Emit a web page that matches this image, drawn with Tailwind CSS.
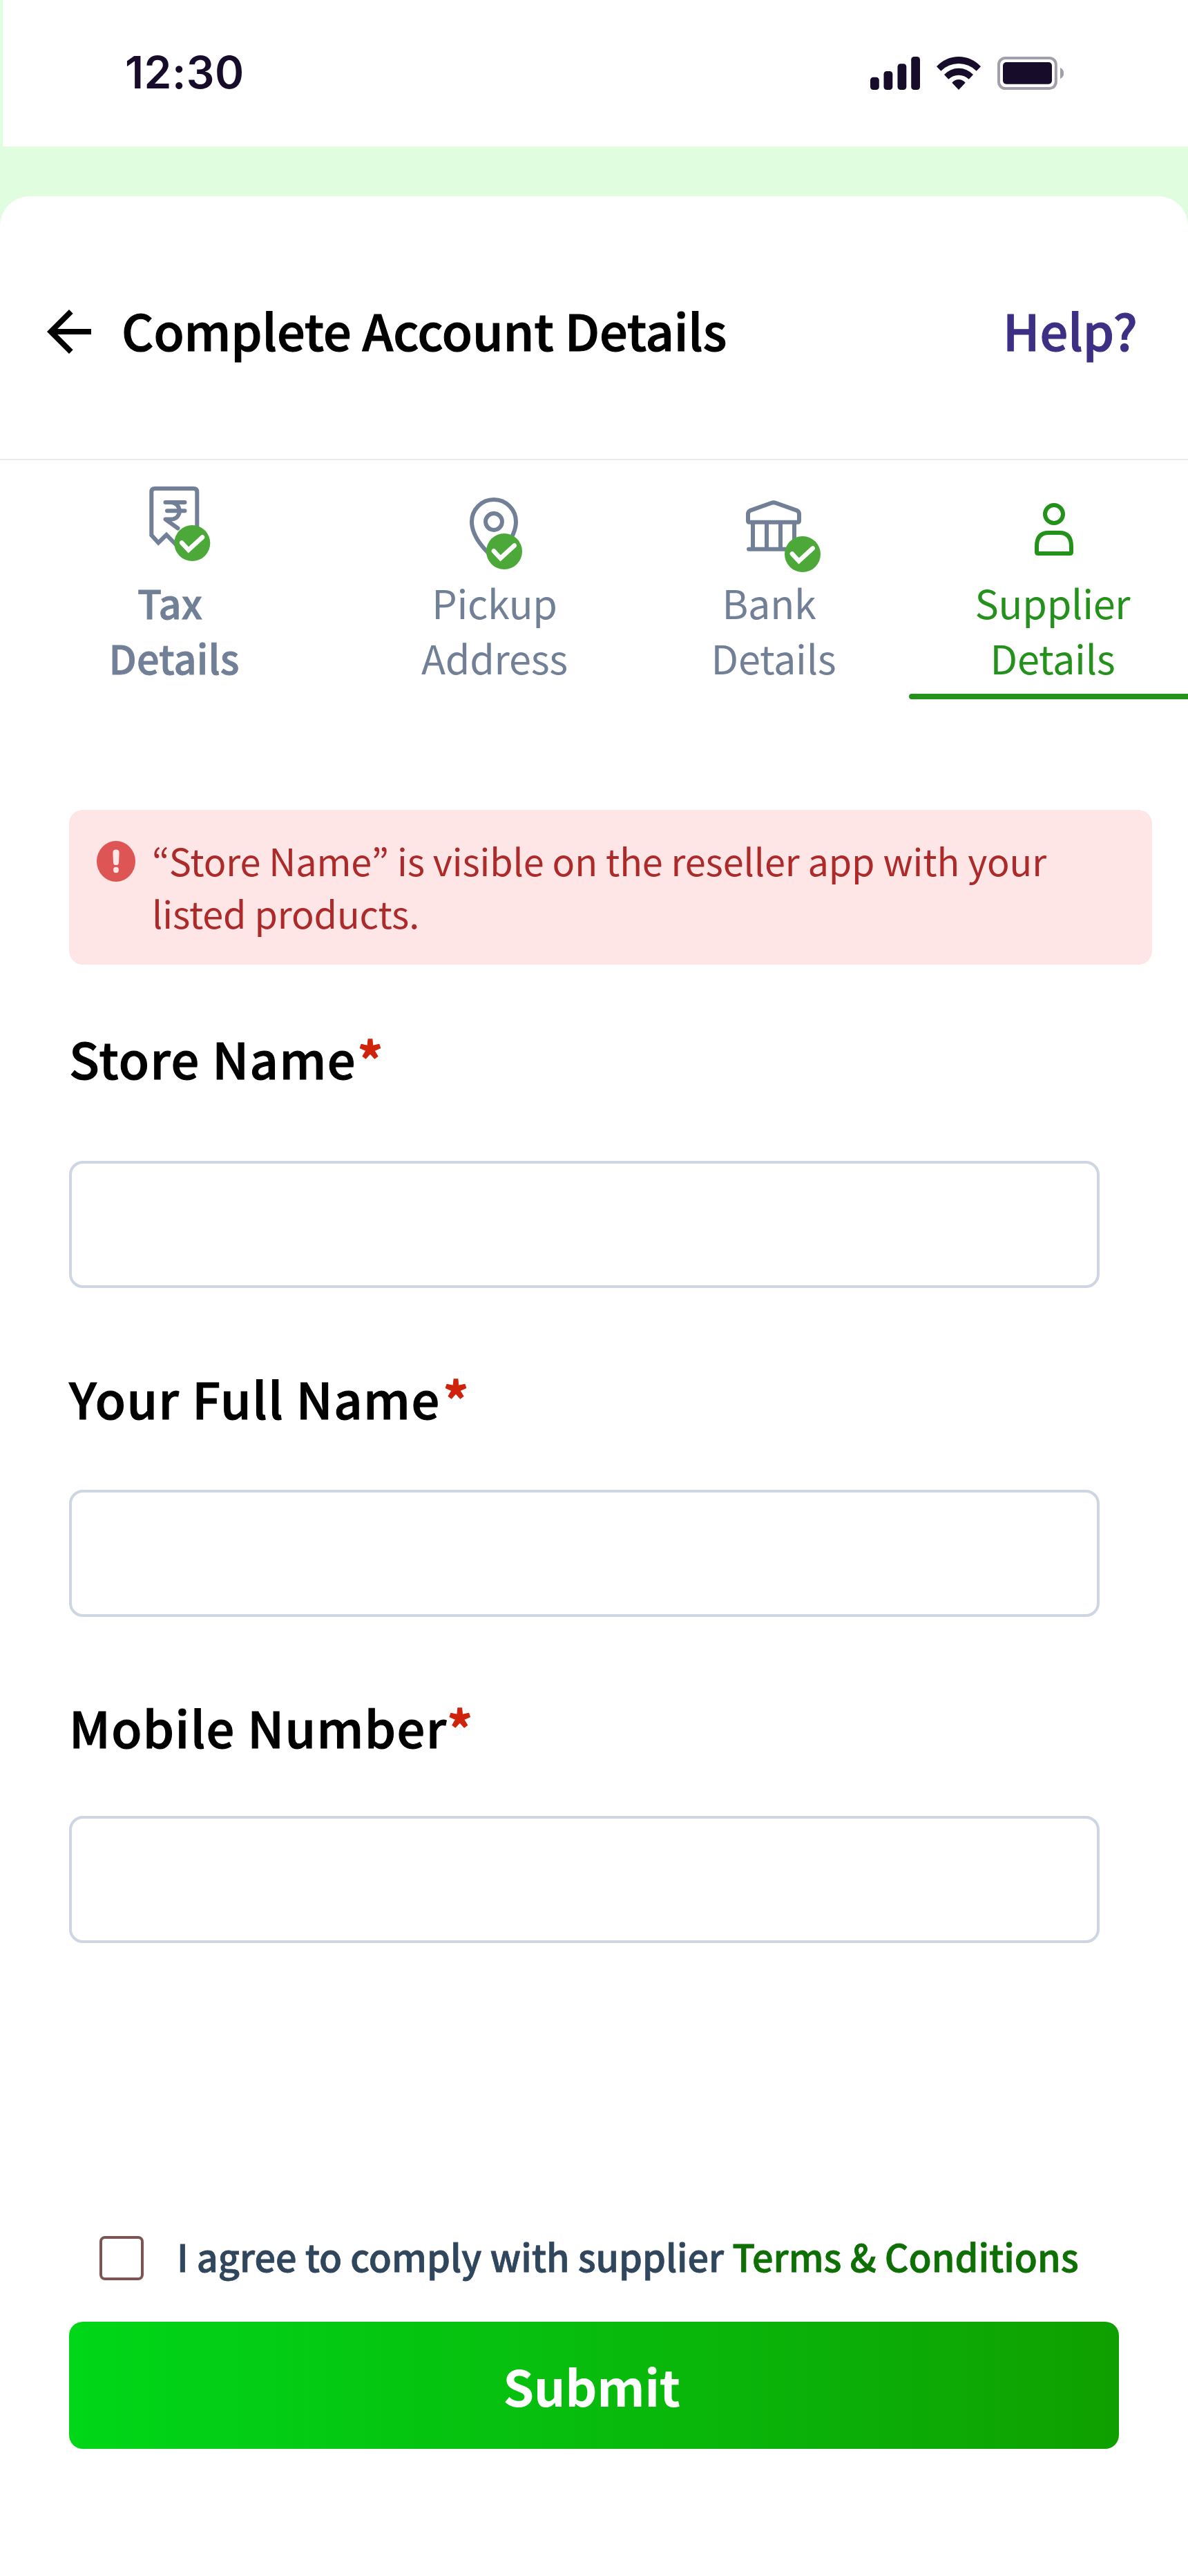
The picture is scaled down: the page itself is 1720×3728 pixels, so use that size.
<!DOCTYPE html>
<html lang="en">
<head>
<meta charset="utf-8">
<title>Complete Account Details</title>
<script src="https://cdn.jsdelivr.net/npm/@tailwindcss/browser@4"></script>
</head>
<body class="bg-[#e0fddf]">
<div class="flex min-h-[3728px] w-[1720px] flex-col overflow-hidden bg-[#e0fddf] font-['Noto_Sans_CJK_KR',sans-serif]">

  <!-- Status bar -->
  <div class="ml-1 flex h-[212px] items-center justify-between bg-white pr-[180px] pl-[177px]">
    <span class="pb-[3px] font-['Inter',sans-serif] text-[64px] leading-none font-semibold tracking-[0.5px] text-[#170d2b]">12:30</span>
    <svg class="h-12 w-[280px]" viewBox="1260 82 280 48" fill="#170d2b">
      <rect x="1260" y="111.7" width="12.8" height="18.3" rx="4.3"/>
      <rect x="1279.5" y="103" width="12.8" height="27" rx="4.3"/>
      <rect x="1299.5" y="92.2" width="12.8" height="37.8" rx="4.3"/>
      <rect x="1319.2" y="82" width="12.8" height="48" rx="4.3"/>
      <path d="M1356 96.3A43 43 0 0 1 1420 96.3L1413.7 102.7A36.2 36.2 0 0 0 1362.3 102.7Z"/>
      <path d="M1367 108A28.4 28.4 0 0 1 1409 108L1402.7 114.7A21 21 0 0 0 1373.3 114.7Z"/>
      <path d="M1378.3 119.7A12.4 12.4 0 0 1 1397.7 119.7L1388 130Z"/>
      <rect x="1446" y="84" width="82.8" height="44" rx="9.5" fill="none" stroke="#a29eaa" stroke-width="4"/>
      <rect x="1452" y="90" width="71" height="31.7" rx="5"/>
      <path d="M1535 98C1542 101 1542 111 1535 114Z" fill="#a29eaa"/>
    </svg>
  </div>

  <main class="mt-[72px] flex grow flex-col rounded-t-[43px] bg-white">
    <!-- Header -->
    <header class="flex h-[382px] items-start border-b-2 border-[#e8ecec] pt-[148px] pl-[52px]">
      <svg class="size-24 shrink-0" viewBox="0 0 24 24"><path d="M20 11H7.83l5.59-5.59L12 4l-8 8 8 8 1.41-1.41L7.83 13H20v-2z"/></svg>
      <h1 class="ml-7 text-[72px] leading-[89px] font-medium tracking-[-0.12px] whitespace-nowrap text-black [-webkit-text-stroke:1.1px]">Complete Account Details</h1>
      <a class="ml-auto w-[268px] text-[72px] leading-[89px] font-medium tracking-[0.05px] text-[#3d3084] [-webkit-text-stroke:1.1px]">Help?</a>
    </header>

    <!-- Steps -->
    <nav class="flex text-center text-[57.6px] leading-[80px] tracking-[-0.28px] text-[#718096]">
      <div class="flex w-[504px] flex-col items-center pl-px font-medium tracking-normal">
        <svg class="h-[165px] w-32" viewBox="188.5 666 128 165" fill="none" stroke="#718096" stroke-width="6">
          <path d="M284.8 780V712Q284.8 707 279.8 707H223.8Q218.8 707 218.8 712V774.5L228.8 785.5L240.5 774L255 789"/>
          <path d="M239 727H267M241.500 739.300H267M246 727C263.500 727 263.500 751.500 247 751.500H239L257 764.500" stroke-linecap="round" stroke-linejoin="round"/>
          <circle cx="277.800" cy="786" r="26" fill="#4ca839" stroke="none"/>
          <path d="M262.700 785.500L272.400 796L292.500 777.500" stroke="#fff" stroke-width="6.500" stroke-linecap="round"/>
        </svg>
        <span class="block pr-[13px] [-webkit-text-stroke:0.9px]">Tax</span>
        <span class="block pr-px tracking-[0.1px] [-webkit-text-stroke:0.9px]">Details</span>
      </div>
      <div class="flex w-[424px] flex-col items-center">
        <svg class="h-[165px] w-32" viewBox="652 666 128 165" fill="none" stroke="#718096" stroke-width="6">
          <path d="M715 808C702 796 683 777 683 755A32 32 0 0 1 747 755C747 777 728 796 715 808Z"/>
          <circle cx="715" cy="755" r="12"/>
          <circle cx="730" cy="798" r="26" fill="#4ca839" stroke="none"/>
          <path d="M714.900 797.500L724.600 808L744.700 789.500" stroke="#fff" stroke-width="6.500" stroke-linecap="round"/>
        </svg>
        <span class="block">Pickup</span>
        <span class="block">Address</span>
      </div>
      <div class="flex w-[388px] flex-col items-center">
        <svg class="h-[165px] w-32" viewBox="1058 666 128 165" fill="none" stroke="#718096" stroke-width="6" overflow="visible">
          <path d="M1085 755.700Q1083 755.700 1083 753.700V744Q1083 740.500 1086 738.800L1116.500 728Q1120 726.500 1123.500 728L1154 738.800Q1157 740.500 1157 744V753.700Q1157 755.700 1155 755.700Z" stroke-linejoin="round"/>
          <path d="M1090 756V794M1110 756V794M1130 756V794M1150 756V794"/>
          <path d="M1084 794.700H1156" stroke-linecap="round"/>
          <circle cx="1162" cy="802" r="26" fill="#4ca839" stroke="none"/>
          <path d="M1146.900 801.500L1156.600 812L1176.700 793.500" stroke="#fff" stroke-width="6.500" stroke-linecap="round"/>
        </svg>
        <span class="block pr-[17px]">Bank</span>
        <span class="block pr-1">Details</span>
      </div>
      <div class="flex w-[404px] flex-col text-[#25911d]">
        <div class="flex flex-col items-center pl-4">
          <svg class="h-[165px] w-32" viewBox="1462 666 128 165" fill="none" stroke="#25911d" stroke-width="6">
            <circle cx="1526" cy="744" r="13"/>
            <path d="M1501 799V791Q1501 771 1518 771H1534Q1551 771 1551 791V799Q1551 801 1549 801H1503Q1501 801 1501 799Z"/>
          </svg>
          <span class="block pr-1">Supplier</span>
          <span class="block pr-1">Details</span>
        </div>
        <div class="mt-[13px] h-2 rounded-l-full bg-[#25911d]"></div>
      </div>
    </nav>

    <!-- Form -->
    <form class="flex flex-col pt-40 pl-[100px]">
      <div class="flex h-56 w-[1568px] items-start gap-6 rounded-[20px] bg-[#ffe6e6] pl-10">
        <svg class="mt-[45px] h-[59px] w-14 shrink-0" viewBox="0 0 56 59">
          <ellipse cx="28" cy="29.500" rx="28" ry="29.500" fill="#dd5555"/>
          <path d="M28 12.500Q32.800 12.500 32.600 17.500L32 31.500Q31.700 35 28 35Q24.300 35 24 31.500L23.400 17.500Q23.200 12.500 28 12.500Z" fill="#ffe6e6"/>
          <ellipse cx="28" cy="42" rx="3.900" ry="4.200" fill="#ffe6e6"/>
        </svg>
        <p class="pt-[34.5px] text-[54px] leading-[76px] tracking-[-0.13px] whitespace-nowrap text-[#ac2a2a]">“Store Name” is visible on the reseller app with your<br>listed products.</p>
      </div>

      <label class="mt-[82.6px] text-[72px] leading-[104px] font-medium tracking-[1.4px] text-black [-webkit-text-stroke:1.1px]">Store Name<span class="ml-0.5 font-bold text-[#cf230c]">*</span></label>
      <input class="mt-[97.4px] h-[184px] w-[1492px] rounded-[20px] border-4 border-[#cdd6e2] bg-white">

      <label class="mt-[106.6px] text-[72px] leading-[104px] font-medium tracking-[1.5px] text-black [-webkit-text-stroke:1.1px]">Your Full Name<span class="ml-1 font-bold text-[#cf230c]">*</span></label>
      <input class="mt-[81.4px] h-[184px] w-[1492px] rounded-[20px] border-4 border-[#cdd6e2] bg-white">

      <label class="mt-[106.6px] text-[72px] leading-[104px] font-medium tracking-[1.4px] text-black [-webkit-text-stroke:1.1px]">Mobile Number<span class="font-bold text-[#cf230c]">*</span></label>
      <input class="mt-[77.4px] h-[184px] w-[1492px] rounded-[20px] border-4 border-[#cdd6e2] bg-white">

      <div class="mt-[424px] flex h-16 items-start gap-12 pl-11">
        <span class="size-16 shrink-0 rounded-lg border-4 border-[#7a5556]"></span>
        <span class="text-[54px] leading-[57px] font-medium tracking-[-0.03px] whitespace-nowrap text-[#30465c] [-webkit-text-stroke:0.8px]">I agree to comply with supplier <a class="text-[#0d6f04]">Terms &amp; Conditions</a></span>
      </div>
      <button type="button" class="mt-[60px] h-[184px] w-[1520px] rounded-[20px] bg-[linear-gradient(to_right,#00d719,#0fa000)] pr-[7px] text-[72px] leading-[104px] font-bold tracking-[-0.4px] text-white">Submit</button>
    </form>
  </main>
</div>
</body>
</html>
